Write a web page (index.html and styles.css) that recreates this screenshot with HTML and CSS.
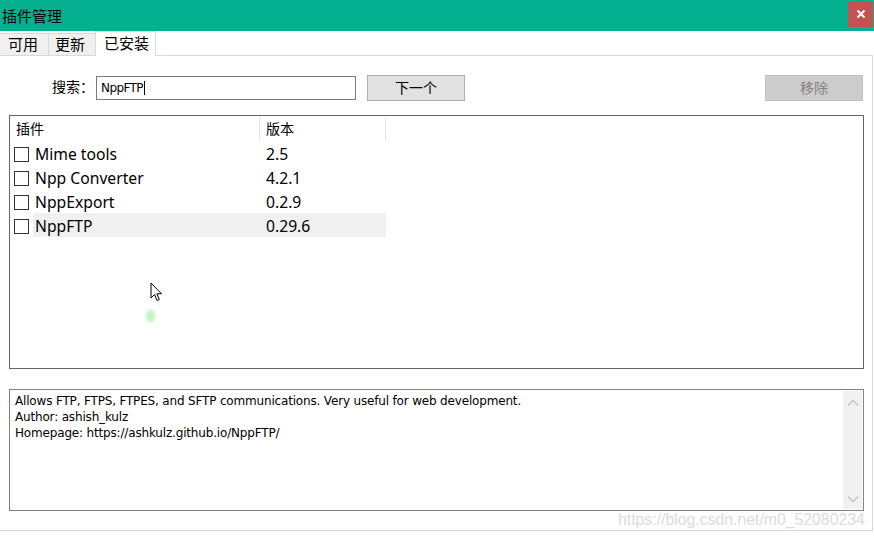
FILE: index.html
```html
<!DOCTYPE html>
<html lang="zh">
<head>
<meta charset="utf-8">
<title>插件管理</title>
<link rel="stylesheet" href="styles.css">
</head>
<body>
<div class="window">
  <div class="titlebar">
    <span class="title">插件管理</span>
    <button class="close" aria-label="关闭">
      <svg width="10" height="10" viewBox="0 0 10 10"><path d="M1.5 1.5 L8.5 8.5 M8.5 1.5 L1.5 8.5" stroke="#fff" stroke-width="2" fill="none"/></svg>
    </button>
  </div>
  <div class="tabs">
    <div class="tab tab-avail">可用</div>
    <div class="tab tab-update">更新</div>
    <div class="tab active">已安装</div>
  </div>
  <div class="panel">
    <div class="toolbar">
      <label class="search-label">搜索：</label>
      <div class="search-input">NppFTP<span class="caret"></span></div>
      <button class="btn">下一个</button>
      <div class="spacer"></div>
      <button class="btn disabled">移除</button>
    </div>
    <div class="list">
      <div class="row header">
        <div class="col name">插件</div>
        <div class="col ver">版本</div>
      </div>
      <div class="row"><div class="col name"><span class="check"></span>Mime tools</div><div class="col ver">2.5</div></div>
      <div class="row"><div class="col name"><span class="check"></span>Npp Converter</div><div class="col ver">4.2.1</div></div>
      <div class="row"><div class="col name"><span class="check"></span>NppExport</div><div class="col ver">0.2.9</div></div>
      <div class="row selected"><div class="col name"><span class="check"></span><span class="sel-text">NppFTP</span></div><div class="col ver">0.29.6</div></div>
    </div>
    <div class="desc">
      <div class="desc-text">
        <div>Allows FTP, FTPS, FTPES, and SFTP communications. Very useful for web development.</div>
        <div>Author: ashish_kulz</div>
        <div>Homepage: https://ashkulz.github.io/NppFTP/</div>
      </div>
      <div class="scrollbar">
        <svg width="12" height="8" viewBox="0 0 12 8"><path d="M1 6.5 L6 1.5 L11 6.5" stroke="#c2c2c2" stroke-width="1.4" fill="none"/></svg>
        <svg width="12" height="8" viewBox="0 0 12 8"><path d="M1 1.5 L6 6.5 L11 1.5" stroke="#c2c2c2" stroke-width="1.4" fill="none"/></svg>
      </div>
    </div>
  </div>
  <svg class="cursor" width="14" height="21" viewBox="0 0 14 21"><path d="M1 1 L1 16 L4.5 12.5 L7 18.5 L9.3 17.5 L6.8 11.8 L11.5 11.8 Z" fill="#fff" stroke="#000" stroke-width="1" stroke-linejoin="round"/></svg>
  <div class="blob"></div>
  <div class="watermark">https://blog.csdn.net/m0_52080234</div>
</div>
</body>
</html>
```
FILE: styles.css
```css
* { box-sizing: border-box; }
html, body { margin: 0; padding: 0; background: #fff; }
body { width: 874px; height: 538px; overflow: hidden; font-family: "Noto Sans", "Noto Sans CJK SC", sans-serif; color: #000; }
.window { position: relative; width: 874px; height: 538px; }

.titlebar { height: 31px; background: #04b08f; display: flex; align-items: center; justify-content: space-between; }
.title { font-family: "Noto Sans CJK SC", sans-serif; font-size: 15px; padding-left: 2px; color: #000; margin-top: -1px; }
.close { width: 25px; height: 26px; margin-right: 1px; margin-top: -3px; background: #c75050; border: none; padding: 0; display: flex; align-items: center; justify-content: center; }

.tabs { display: flex; height: 24px; align-items: flex-end; }
.tab { height: 22px; background: #f0f0f0; border: 1px solid #d9d9d9; border-bottom: none; font-family: "Noto Sans CJK SC", sans-serif; font-size: 15px; line-height: 20px; padding: 0; margin-right: -1px; white-space: nowrap; overflow: hidden; flex: none; }
.tab-avail { border-left: none; padding-left: 8px; width: 49px; }
.tab-update { padding-left: 6px; width: 48px; }
.tab.active { width: 61px; background: #fff; padding-left: 8px; line-height: 22px; position: relative; z-index: 1; margin-bottom: -1px; height: 25px; }

.panel { width: 873px; height: 476px; border-top: 1px solid #d9d9d9; border-right: 1px solid #d9d9d9; border-bottom: 1px solid #d9d9d9; padding: 19px 9px 0 9px; display: flex; flex-direction: column; }

.toolbar { display: flex; align-items: center; height: 26px; }
.search-label { font-family: "Noto Sans CJK SC", sans-serif; font-size: 14px; margin-left: 43px; width: 44px; margin-top: -4px; white-space: nowrap; }
.search-input { width: 260px; height: 24px; border: 1px solid #7a7a7a; font-family: "DejaVu Sans", sans-serif; font-size: 12px; letter-spacing: -0.6px; line-height: 22px; padding-left: 4px; color: #000; display: flex; align-items: center; }
.caret { display: inline-block; width: 1px; height: 14px; background: #000; margin-left: 1px; }
.btn { width: 98px; height: 26px; margin-left: 11px; background: #e1e1e1; border: 1px solid #adadad; font-family: "Noto Sans CJK SC", sans-serif; font-size: 14px; padding: 0 0 3px 0; color: #000; }
.spacer { flex: 1; }
.btn.disabled { background: #cccccc; border-color: #bfbfbf; color: #838383; margin-left: 0; margin-right: 0; }

.list { margin-top: 14px; width: 855px; height: 254px; border: 1px solid #646464; display: flex; flex-direction: column; }
.row { display: flex; height: 24px; align-items: center; }
.row.header { height: 25px; }
.col { height: 100%; display: flex; align-items: center; font-size: 15.7px; padding-top: 2px; }
.col.name { width: 250px; padding-left: 4px; }
.col.ver { width: 126px; padding-left: 6px; }
.header .col { font-family: "Noto Sans CJK SC", sans-serif; font-size: 14px; padding-top: 0; padding-bottom: 2px; }
.header .col.name { padding-left: 6px; border-right: 1px solid #e5e5e5; width: 250px; }
.header .col.ver { border-right: 1px solid #e5e5e5; padding-left: 6px; }
.check { width: 15px; height: 15px; border: 1px solid #333; margin-right: 6px; flex: none; background: #fff; }
.row.selected .col.ver { background: #f0f0f0; }
.row.selected .col.name { padding-left: 0; padding-top: 0; }
.row.selected .col.name .check { margin-left: 4px; margin-right: 4px; margin-top: 2px; }
.sel-text { background: #f0f0f0; height: 100%; flex: 1; display: flex; align-items: center; padding-left: 2px; padding-top: 2px; }

.desc { margin-top: 20px; width: 855px; height: 122px; border: 1px solid #828282; display: flex; }
.desc-text { flex: 1; padding: 3px 5px; font-family: "DejaVu Sans", sans-serif; font-size: 12px; letter-spacing: -0.17px; line-height: 16px; color: #000; }
.scrollbar { width: 19px; margin: 1px 1px 1px 0; background: #f0f0f0; display: flex; flex-direction: column; justify-content: space-between; align-items: center; padding: 8px 0 6px; }

.cursor { position: absolute; left: 150px; top: 282px; }
.blob { position: absolute; left: 144px; top: 308px; width: 13px; height: 16px; border-radius: 50%; background: radial-gradient(ellipse, #c4f4c4 25%, #e2fae2 55%, rgba(255,255,255,0) 72%); }
.watermark { position: absolute; left: 618px; top: 511px; font-family: "Liberation Sans", sans-serif; font-size: 15.8px; color: #dcdcdc; }
```
